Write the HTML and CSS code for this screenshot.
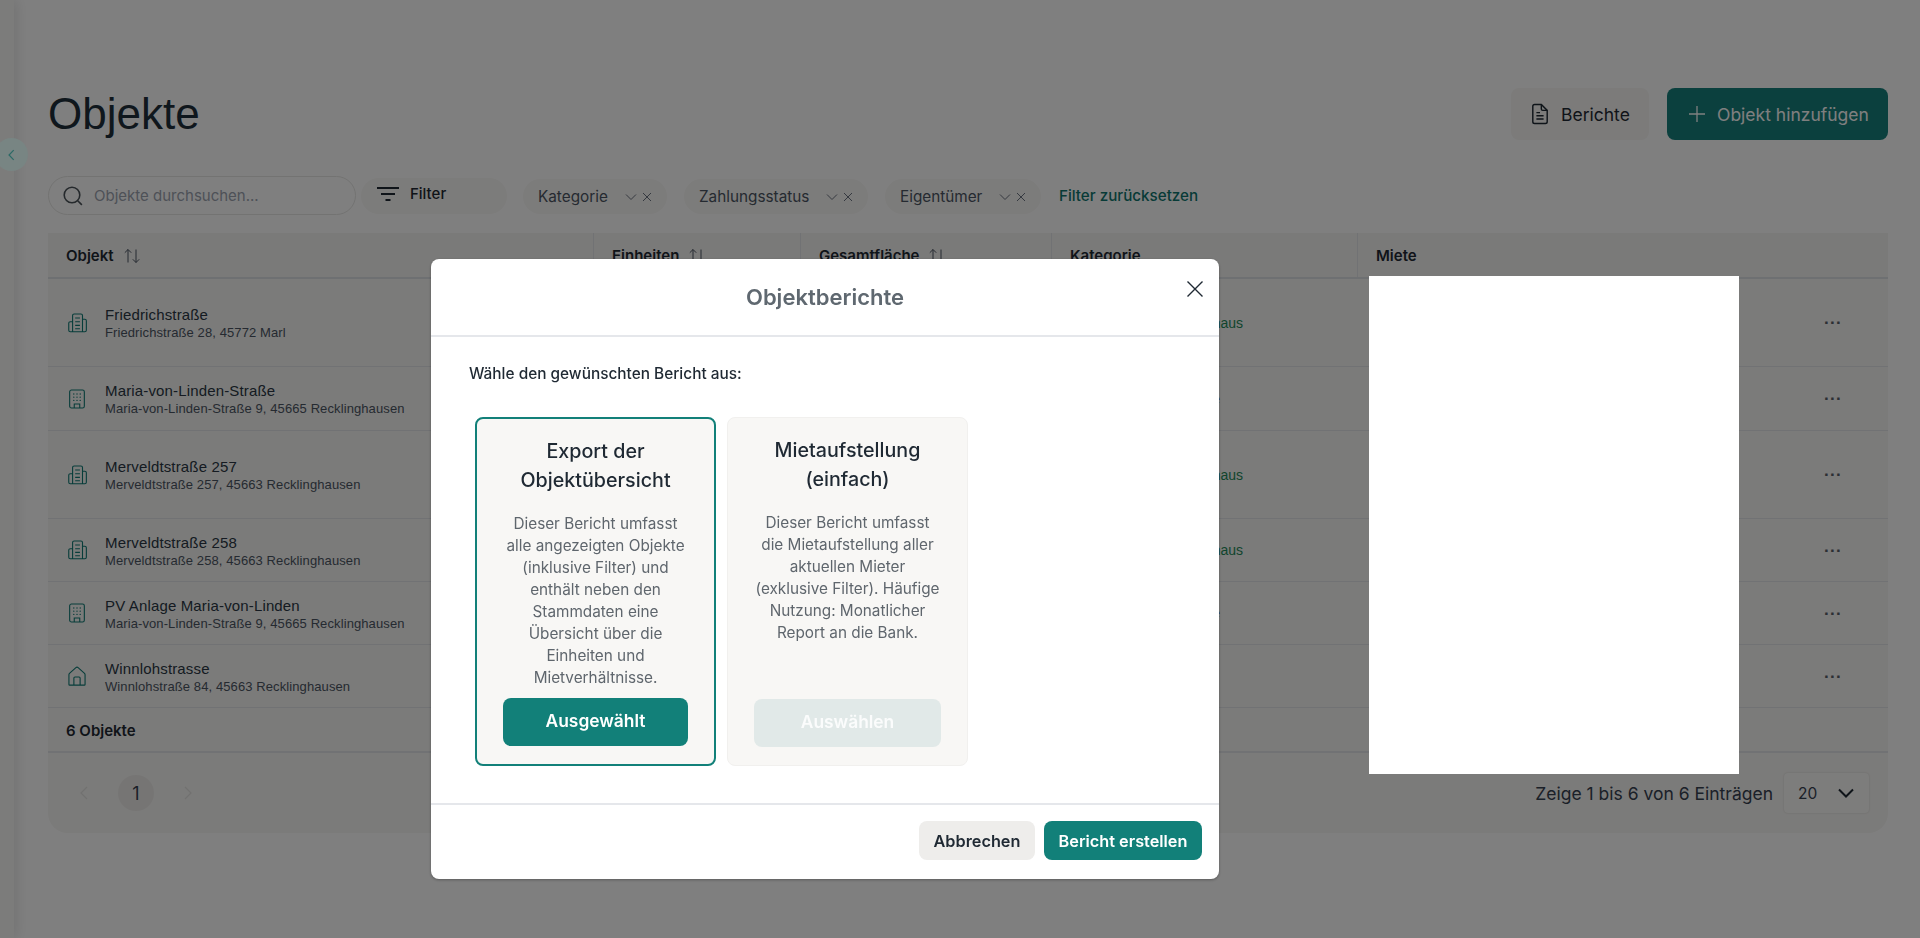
FILE: index.html
```html
<!DOCTYPE html>
<html lang="de">
<head>
<meta charset="utf-8">
<title>Objekte</title>
<link rel="stylesheet" href="styles.css">
</head>
<body>
<svg class="sprite" width="0" height="0" aria-hidden="true">
  <symbol id="i-tower" viewBox="0 0 24 24"><path d="M7.2 21.6V3.9c0-1 .7-1.7 1.7-1.7h7.4c1 0 1.7.7 1.7 1.7v17.7M7.2 10.6H4.7c-1 0-1.7.7-1.7 1.7v7.6c0 1 .7 1.7 1.7 1.7h15.8c1 0 1.7-.7 1.7-1.7V9.6c0-1-.7-1.7-1.7-1.7H18M10 6.6h5.2M10 10.6h5.2M10 14.6h5.2M10 18.2h5.2"/></symbol>
  <symbol id="i-office" viewBox="0 0 24 24"><rect x="4" y="2.2" width="16" height="19.6" rx="2"/><path d="M9 21.8v-4.4h6v4.4"/><path class="dots" d="M8.5 6.5h.01M12 6.5h.01M15.5 6.5h.01M8.5 10h.01M12 10h.01M15.5 10h.01M8.5 13.5h.01M12 13.5h.01M15.5 13.5h.01"/></symbol>
  <symbol id="i-house" viewBox="0 0 24 24"><path d="M3.2 21.2V10.6c0-.5.2-1 .6-1.4l7-6.3c.7-.6 1.7-.6 2.4 0l7 6.3c.4.4.6.9.6 1.4v10.6c0 .4-.3.7-.7.7H3.9c-.4 0-.7-.3-.7-.7Z"/><path d="M8.6 21.9v-7.6c0-.7.5-1.2 1.2-1.2h4.4c.7 0 1.2.5 1.2 1.2v7.6"/></symbol>
  <symbol id="i-sort" viewBox="0 0 18 18"><path d="M5 15.500V2.500M1.800 5.700 5 2.500l3.200 3.200M13 2.500v13M9.800 12.300l3.200 3.200 3.200-3.200"/></symbol>
  <symbol id="i-chev" viewBox="0 0 12 12"><path d="M1 3.500 6 8.500l5-5"/></symbol>
  <symbol id="i-x" viewBox="0 0 12 12"><path d="M2 2l8 8M10 2l-8 8"/></symbol>
</svg>

<div class="app">
  <aside class="rail"></aside>
  <main class="page">
    <header class="page-head">
      <h1 class="page-title">Objekte</h1>
      <div class="page-actions">
        <button class="btn-reports" type="button">
          <svg class="icon-doc" viewBox="0 0 20 24" width="18" height="22"><path d="M4 1.500h7.500l6.500 6.500v12.500c0 1.100-.9 2-2 2H4c-1.100 0-2-.9-2-2v-17c0-1.100.9-2 2-2Z"/><path d="M11.500 1.500V6.500c0 .8.700 1.500 1.500 1.500h5M6 10.500h4M6 14h8M6 17.500h8"/></svg>
          <span>Berichte</span>
        </button>
        <button class="btn-add" type="button">
          <svg class="icon-plus" viewBox="0 0 16 16" width="16" height="16"><path d="M8 0v16M0 8h16"/></svg>
          <span>Objekt hinzufügen</span>
        </button>
      </div>
    </header>

    <div class="filters">
      <label class="search">
        <svg viewBox="0 0 20 20" width="20" height="20"><circle cx="9" cy="9" r="7.800"/><path d="m14.700 14.700 4.200 4.200"/></svg>
        <span class="placeholder">Objekte durchsuchen...</span>
      </label>
      <button class="filter-btn" type="button">
        <svg viewBox="0 0 22 14" width="22" height="14"><path d="M0 1h22M4 7h14M8.500 13h5"/></svg>
        <span>Filter</span>
      </button>
      <div class="chip chip-a"><span class="chip-label">Kategorie</span><svg class="chip-chev"><use href="#i-chev"/></svg><svg class="chip-x"><use href="#i-x"/></svg></div>
      <div class="chip chip-b"><span class="chip-label">Zahlungsstatus</span><svg class="chip-chev"><use href="#i-chev"/></svg><svg class="chip-x"><use href="#i-x"/></svg></div>
      <div class="chip chip-c"><span class="chip-label">Eigentümer</span><svg class="chip-chev"><use href="#i-chev"/></svg><svg class="chip-x"><use href="#i-x"/></svg></div>
      <a class="reset-link" href="#">Filter zurücksetzen</a>
    </div>

    <section class="table">
      <div class="row row-head">
        <div class="th">Objekt <svg class="sort"><use href="#i-sort"/></svg></div>
        <div class="th">Einheiten <svg class="sort"><use href="#i-sort"/></svg></div>
        <div class="th">Gesamtfläche <svg class="sort"><use href="#i-sort"/></svg></div>
        <div class="th">Kategorie</div>
        <div class="th">Miete</div>
      </div>

      <div class="row row-tall">
        <div class="td obj"><svg class="obj-icon"><use href="#i-tower"/></svg><div class="obj-text"><div class="obj-name">Friedrichstraße</div><div class="obj-addr">Friedrichstraße 28, 45772 Marl</div></div></div>
        <div class="td"></div><div class="td"></div>
        <div class="td"><span class="cat cat-green">Mehrfamilienhaus</span></div>
        <div class="td td-more"><span class="more">···</span></div>
      </div>
      <div class="row row-low row-2">
        <div class="td obj"><svg class="obj-icon"><use href="#i-office"/></svg><div class="obj-text"><div class="obj-name">Maria-von-Linden-Straße</div><div class="obj-addr">Maria-von-Linden-Straße 9, 45665 Recklinghausen</div></div></div>
        <div class="td"></div><div class="td"></div>
        <div class="td"><span class="cat cat-purple">Gewerbe</span></div>
        <div class="td td-more"><span class="more">···</span></div>
      </div>
      <div class="row row-tall">
        <div class="td obj"><svg class="obj-icon"><use href="#i-tower"/></svg><div class="obj-text"><div class="obj-name">Merveldtstraße 257</div><div class="obj-addr">Merveldtstraße 257, 45663 Recklinghausen</div></div></div>
        <div class="td"></div><div class="td"></div>
        <div class="td"><span class="cat cat-green">Mehrfamilienhaus</span></div>
        <div class="td td-more"><span class="more">···</span></div>
      </div>
      <div class="row row-low">
        <div class="td obj"><svg class="obj-icon"><use href="#i-tower"/></svg><div class="obj-text"><div class="obj-name">Merveldtstraße 258</div><div class="obj-addr">Merveldtstraße 258, 45663 Recklinghausen</div></div></div>
        <div class="td"></div><div class="td"></div>
        <div class="td"><span class="cat cat-green">Mehrfamilienhaus</span></div>
        <div class="td td-more"><span class="more">···</span></div>
      </div>
      <div class="row row-low">
        <div class="td obj"><svg class="obj-icon"><use href="#i-office"/></svg><div class="obj-text"><div class="obj-name">PV Anlage Maria-von-Linden</div><div class="obj-addr">Maria-von-Linden-Straße 9, 45665 Recklinghausen</div></div></div>
        <div class="td"></div><div class="td"></div>
        <div class="td"><span class="cat cat-purple">Gewerbe</span></div>
        <div class="td td-more"><span class="more">···</span></div>
      </div>
      <div class="row row-low">
        <div class="td obj"><svg class="obj-icon"><use href="#i-house"/></svg><div class="obj-text"><div class="obj-name">Winnlohstrasse</div><div class="obj-addr">Winnlohstraße 84, 45663 Recklinghausen</div></div></div>
        <div class="td"></div><div class="td"></div><div class="td"></div>
        <div class="td td-more"><span class="more">···</span></div>
      </div>
      <div class="row-total">6 Objekte</div>
      <div class="pager-bar">
        <nav class="pager">
          <span class="pg-arrow"><svg viewBox="0 0 8 14" width="8" height="14"><path d="M7 1 1 7l6 6"/></svg></span>
          <span class="pg-num">1</span>
          <span class="pg-arrow"><svg viewBox="0 0 8 14" width="8" height="14"><path d="m1 1 6 6-6 6"/></svg></span>
        </nav>
        <div class="pager-info">
          <span>Zeige 1 bis 6 von 6 Einträgen</span>
          <div class="page-size"><span>20</span><svg viewBox="0 0 16 10" width="16" height="10"><path d="m1 1.500 7 7 7-7"/></svg></div>
        </div>
      </div>
    </section>
  </main>
</div>

<div class="overlay"></div>

<button class="rail-toggle" type="button" aria-label="Seitenleiste einklappen">
  <svg viewBox="0 0 8 13" width="7" height="12"><path d="M6.500 1 1.200 6.500l5.300 5.500"/></svg>
</button>

<div class="modal" role="dialog" aria-modal="true">
  <div class="modal-head">
    <h2 class="modal-title">Objektberichte</h2>
    <button class="modal-close" type="button" aria-label="Schließen"><svg viewBox="0 0 16 16" width="16" height="16"><path d="m.5.500 15 15M15.500.500l-15 15"/></svg></button>
  </div>
  <div class="modal-body">
    <p class="modal-lead">Wähle den gewünschten Bericht aus:</p>
    <div class="report-grid">
      <article class="report report-on">
        <h3 class="report-title">Export der Objektübersicht</h3>
        <p class="report-desc">Dieser Bericht umfasst alle angezeigten Objekte (inklusive Filter) und enthält neben den Stammdaten eine Übersicht über die Einheiten und Mietverhältnisse.</p>
        <button class="report-btn" type="button">Ausgewählt</button>
      </article>
      <article class="report">
        <h3 class="report-title">Mietaufstellung (einfach)</h3>
        <p class="report-desc">Dieser Bericht umfasst die Mietaufstellung aller aktuellen Mieter (exklusive Filter). Häufige Nutzung: Monatlicher Report an die Bank.</p>
        <button class="report-btn report-btn-off" type="button">Auswählen</button>
      </article>
    </div>
  </div>
  <div class="modal-foot">
    <button class="btn-cancel" type="button">Abbrechen</button>
    <button class="btn-create" type="button">Bericht erstellen</button>
  </div>
</div>

<div class="redaction"></div>
</body>
</html>
```

FILE: styles.css
```css
* { box-sizing: border-box; }
html, body { margin: 0; height: 100%; }
body {
  background: #fff;
  font-family: Inter, "Liberation Sans", sans-serif;
  color: #1f2933;
  overflow: hidden;
}
button { font-family: inherit; border: 0; cursor: pointer; }
h1, h2, h3, p { margin: 0; }
.sprite { position: absolute; }
svg { fill: none; stroke: currentColor; display: block; }

.app { display: flex; height: 938px; }
.rail {
  width: 14px;
  flex: none;
  background: #f8f8f6;
  box-shadow: 2px 0 14px rgba(0, 0, 0, .12);
}
.rail-toggle {
  position: fixed;
  left: -5px;
  top: 138px;
  width: 33px;
  height: 33px;
  border-radius: 50%;
  background: #788583;
  color: #2c6a66;
  padding: 0;
  display: flex;
  align-items: center;
  justify-content: center;
}
.rail-toggle svg { stroke-width: 1.400; }

.page {
  flex: 1;
  min-width: 0;
  padding: 88px 32px 0 34px;
}

.page-head { display: flex; justify-content: space-between; height: 52px; }
.page-title {
  font-family: "Liberation Sans", Arial, sans-serif;
  font-size: 44px;
  font-weight: 400;
  line-height: 52px;
  color: #1f2f3a;
}
.page-actions { display: flex; gap: 18px; }
.btn-reports, .btn-add {
  height: 52px;
  border-radius: 8px;
  font-size: 17.500px;
  display: flex;
  align-items: center;
}
.btn-reports {
  width: 138px;
  background: #f8f7f5;
  color: #1f2933;
  padding-left: 20px;
  gap: 12px;
}
.icon-doc { stroke-width: 1.600; }
.btn-add {
  width: 221px;
  background: #16807c;
  color: #fff;
  padding-left: 22px;
  gap: 12px;
}
.icon-plus { stroke-width: 1.300; }

.filters {
  display: flex;
  align-items: center;
  height: 39px;
  margin-top: 36px;
}
.search {
  width: 308px;
  height: 39px;
  border: 1.500px solid #e6e6e4;
  border-radius: 20px;
  background: #fff;
  display: flex;
  align-items: center;
  padding-left: 14px;
  gap: 11px;
  color: #4a5258;
  font-size: 15px;
}
.search svg { stroke-width: 1.600; flex: none; }
.placeholder { color: #9ca3af; }
.filter-btn {
  width: 146px;
  height: 36px;
  margin-left: 5px;
  border-radius: 18px;
  background: #f9f8f6;
  color: #1f2933;
  display: flex;
  align-items: center;
  gap: 11px;
  padding: 0 0 4px 16px;
  font-size: 15px;
  font-weight: 500;
}
.filter-btn svg { stroke-width: 1.800; }
.chip {
  height: 35px;
  margin-top: 2px;
  border-radius: 18px;
  background: #f9f8f6;
  display: flex;
  align-items: center;
  padding-left: 15px;
  color: #4b5563;
  font-size: 15.300px;
}
.chip-a { width: 144px; margin-left: 16px; }
.chip-b { width: 184px; margin-left: 17px; }
.chip-c { width: 156px; margin-left: 17px; }
.chip-chev { width: 12px; height: 12px; margin-left: 17px; color: #6b7280; stroke-width: 1; }
.chip-x { width: 12px; height: 12px; margin-left: 4px; color: #6b7280; stroke-width: 1; }
.reset-link {
  margin-left: 18px;
  font-size: 15.200px;
  font-weight: 500;
  color: #0f766e;
  text-decoration: none;
}

.table {
  margin-top: 18px;
  height: 600px;
  background: #f7f6f4;
  border-radius: 0 0 20px 20px;
}
.row {
  display: grid;
  grid-template-columns: 545px 207px 251px 306px 531px;
  border-bottom: 1px solid #e2e4e8;
}
.row-head { height: 46px; border-bottom: 2px solid #dce0e5; background: #f5f4f2; }
.row-tall { height: 88px; }
.row-low { height: 63px; }
.row-2 { height: 64px; }
.th {
  display: flex;
  align-items: center;
  gap: 9px;
  padding: 1px 0 0 18px;
  font-size: 15px;
  font-weight: 600;
  border-left: 1px solid #e2e4e8;
}
.th:first-child { border-left: 0; }
.sort { width: 18px; height: 18px; stroke-width: 1; color: #4b5563; }
.td { display: flex; align-items: center; }
.obj { padding-left: 18px; gap: 17px; font-family: "Liberation Sans", Arial, sans-serif; }
.obj-icon { width: 22px; height: 22px; color: #0e7a74; stroke-width: 1.200; flex: none; }
.obj-text { margin-top: 2px; }
.dots { stroke-width: 1.500; stroke-linecap: round; }
.obj-name { font-size: 15px; line-height: 19px; color: #2a3744; letter-spacing: .15px; }
.obj-addr { font-size: 13px; line-height: 18px; color: #4b5563; letter-spacing: .1px; }
.cat {
  font-family: "Liberation Sans", Arial, sans-serif;
  font-size: 14px;
  width: 192px;
  text-align: right;
}
.cat-green { color: #1f8a5b; }
.cat-purple { color: #4338ca; padding-right: 23px; }
.td-more { justify-content: flex-end; padding-right: 46px; }
.more {
  font-family: "Liberation Sans", Arial, sans-serif;
  font-size: 17px;
  font-weight: 700;
  letter-spacing: .3px;
  color: #565e68;
  line-height: 1;
}
.row-total {
  height: 45px;
  padding: 2px 0 0 18px;
  display: flex;
  align-items: center;
  font-size: 15px;
  font-weight: 600;
  border-bottom: 2px solid #e2e4e8;
}
.pager-bar {
  height: 80px;
  display: flex;
  align-items: center;
  justify-content: space-between;
  padding: 0 19px 0 18px;
}
.pager { display: flex; align-items: center; gap: 16px; }
.pg-arrow {
  width: 36px;
  height: 36px;
  display: flex;
  align-items: center;
  justify-content: center;
  color: #e2e2e0;
}
.pg-arrow svg { stroke-width: 1.200; }
.pg-num {
  width: 36px;
  height: 36px;
  border-radius: 50%;
  background: #ecebe9;
  display: flex;
  align-items: center;
  justify-content: center;
  font-size: 18px;
  color: #374151;
}
.pager-info { display: flex; align-items: center; gap: 11px; font-size: 17.500px; color: #374151; }
.page-size {
  width: 85px;
  height: 40px;
  border-radius: 4px;
  background: #fafaf8;
  box-shadow: 0 0 2px rgba(0, 0, 0, .15);
  display: flex;
  align-items: center;
  justify-content: space-between;
  padding: 0 15px 0 14px;
  font-size: 15.500px;
}
.page-size svg { stroke-width: 2; color: #1f2933; }

.overlay {
  position: fixed;
  inset: 0;
  background: rgba(0, 0, 0, .5);
}

.modal {
  position: fixed;
  left: 431px;
  top: 259px;
  width: 788px;
  height: 620px;
  background: #fff;
  border-radius: 8px;
  display: flex;
  flex-direction: column;
  box-shadow: 0 1px 3px rgba(0, 0, 0, .3);
}
.modal-head {
  position: relative;
  height: 78px;
  flex: none;
  border-bottom: 2px solid #e5e7eb;
  display: flex;
  align-items: center;
  justify-content: center;
}
.modal-title { font-size: 22px; font-weight: 600; color: #5f6870; }
.modal-close {
  position: absolute;
  right: 16px;
  top: 22px;
  padding: 0;
  background: none;
  color: #1f2933;
  line-height: 0;
}
.modal-close svg { stroke-width: 1.400; }
.modal-body { flex: 1; padding: 27px 0 0 38px; }
.modal-lead { font-size: 15.400px; font-weight: 500; line-height: 20px; color: #1f2933; }
.report-grid { display: flex; gap: 11px; margin: 33px 0 0 6px; }
.report {
  width: 241px;
  height: 349px;
  background: #f8f7f5;
  border: 1px solid #f1f0ee;
  border-radius: 8px;
  padding: 18px 26px 18px;
  display: flex;
  flex-direction: column;
  text-align: center;
}
.report-on { border: 2px solid #128079; }
.report-title { font-size: 19.700px; font-weight: 500; line-height: 29px; color: #1f2933; }
.report-desc { margin-top: 18px; font-size: 15.300px; line-height: 22px; color: #5f666d; }
.report-btn {
  margin-top: auto;
  height: 48px;
  width: 100%;
  flex: none;
  border-radius: 8px;
  background: #128079;
  color: #fff;
  font-size: 17.400px;
  font-weight: 600;
  padding: 0 0 4px;
}
.report-btn-off { background: #e1e9e8; color: #fbfcfc; }
.modal-foot {
  flex: none;
  height: 76px;
  border-top: 2px solid #e5e7eb;
  display: flex;
  justify-content: flex-end;
  align-items: flex-start;
  gap: 9px;
  padding: 16px 17px 0 0;
}
.btn-cancel, .btn-create {
  height: 39px;
  border-radius: 8px;
  font-size: 16.300px;
  font-weight: 600;
  padding: 0;
}
.btn-cancel { width: 116px; background: #eeedeb; color: #1f2933; }
.btn-create { width: 158px; background: #128079; color: #fff; }

.redaction {
  position: fixed;
  left: 1369px;
  top: 276px;
  width: 370px;
  height: 498px;
  background: #fff;
}
```
